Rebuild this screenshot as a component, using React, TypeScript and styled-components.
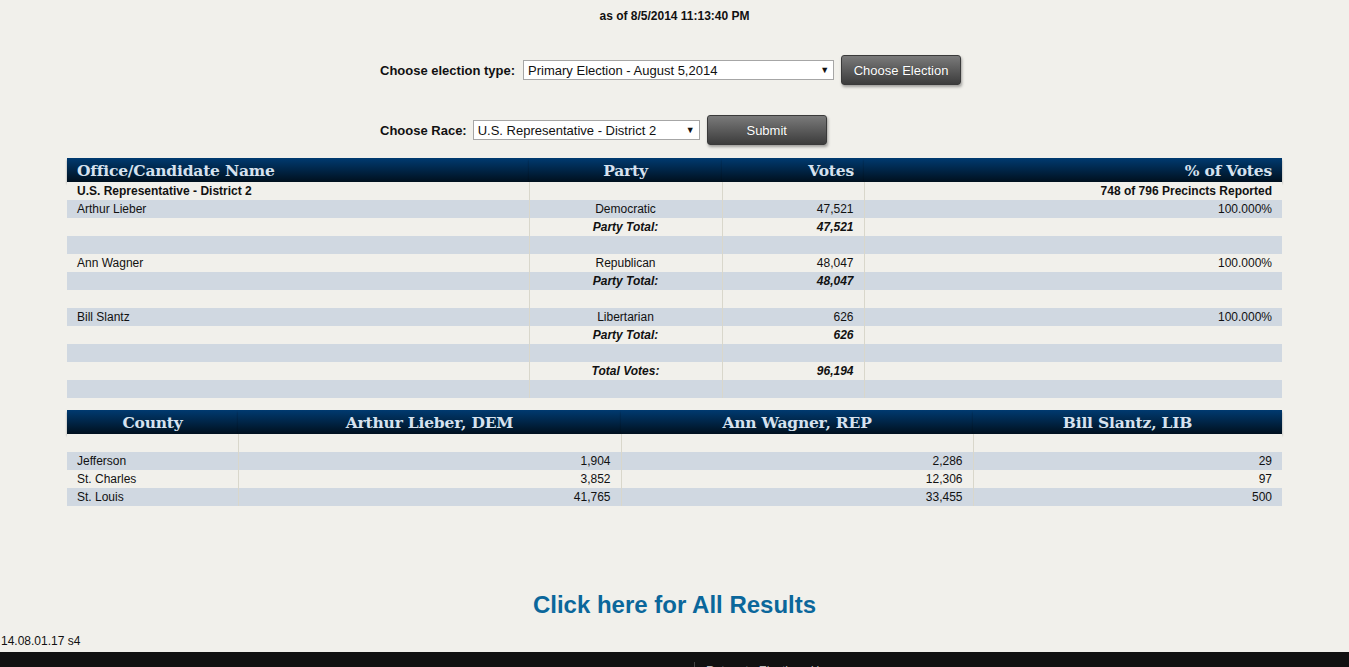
import React from "react";
import styled, { createGlobalStyle } from "styled-components";

const GlobalStyle = createGlobalStyle`
  html, body { margin: 0; padding: 0; }
  body {
    background: #f1f0eb;
    font-family: "Liberation Sans", Arial, sans-serif;
    color: #111;
    overflow: hidden;
  }
`;

const Page = styled.div`
  display: flex;
  flex-direction: column;
  min-height: 667px;
`;

const Stamp = styled.div`
  text-align: center;
  font-size: 12px;
  font-weight: bold;
  line-height: 14px;
  padding-top: 9px;
`;

const Form = styled.form`
  width: 589px;
  margin: 32px auto 0;
  display: flex;
  flex-direction: column;
  gap: 30px;
`;

const FormRow = styled.div`
  display: flex;
  align-items: center;
  height: 30px;
`;

const Label = styled.label<{ $gap?: number }>`
  font-size: 13px;
  font-weight: bold;
  margin-right: ${(p) => p.$gap ?? 6}px;
`;

const SelectWrap = styled.div<{ $w: number }>`
  position: relative;
  width: ${(p) => p.$w}px;
  height: 20px;
  margin-right: 7px;
`;

const Select = styled.select`
  appearance: none;
  width: 100%;
  height: 20px;
  box-sizing: border-box;
  border: 1px solid #a6a6a6;
  background: #fff;
  font-family: "Liberation Sans", Arial, sans-serif;
  font-size: 13px;
  color: #111;
  padding: 0 0 0 4px;
  border-radius: 0;
  outline: none;
`;

const Arrow = styled.span`
  position: absolute;
  right: 5px;
  top: 4px;
  font-size: 9px;
  line-height: 12px;
  color: #111;
  pointer-events: none;
`;

const Button = styled.button`
  width: 120px;
  height: 30px;
  border: 1px solid #3a3a3a;
  border-radius: 3px;
  background: linear-gradient(#7a7a7a, #3c3c3c);
  box-shadow: 1px 2px 3px rgba(0, 0, 0, 0.35);
  color: #fff;
  font-family: "Liberation Sans", Arial, sans-serif;
  font-size: 13px;
  text-shadow: 0 0 1px rgba(0, 0, 0, 0.4);
  padding: 0;
  cursor: pointer;
`;

const Table = styled.table<{ $mt: number }>`
  width: 1215px;
  margin: ${(p) => p.$mt}px auto 0;
  border-collapse: collapse;
  table-layout: fixed;
  font-size: 12px;
`;

const Th = styled.th<{ $align?: string }>`
  height: 24px;
  padding: 1px 10px 0;
  box-sizing: border-box;
  background: linear-gradient(#003a70, #00101e);
  color: #d6e2ef;
  font-family: "DejaVu Serif", Georgia, serif;
  font-size: 15.5px;
  font-weight: bold;
  letter-spacing: -0.2px;
  text-align: ${(p) => p.$align || "center"};
  box-shadow: 0 2px 2px rgba(0, 0, 0, 0.35);
  line-height: 23px;
  white-space: nowrap;
`;

const Tr = styled.tr<{ $alt?: boolean }>`
  background: ${(p) => (p.$alt ? "#d0d8e1" : "#f1f0eb")};
`;

const Td = styled.td<{ $align?: string; $bold?: boolean; $italic?: boolean }>`
  height: 18px;
  box-sizing: border-box;
  padding: 1px 10px 0;
  line-height: 17px;
  border-left: 1px solid #d9d7cb;
  border-right: 1px solid #d9d7cb;
  text-align: ${(p) => p.$align || "left"};
  font-weight: ${(p) => (p.$bold ? "bold" : "normal")};
  font-style: ${(p) => (p.$italic ? "italic" : "normal")};
  white-space: nowrap;
  &:first-child { border-left: none; }
  &:last-child { border-right: none; }
`;

const AllResults = styled.a`
  display: block;
  text-align: center;
  margin-top: 85px;
  font-size: 24px;
  font-weight: bold;
  line-height: 28px;
  color: #0b679b;
  text-decoration: none;
`;

const Version = styled.div`
  font-size: 12px;
  line-height: 14px;
  margin-top: 15px;
  padding-left: 1px;
`;

const Footer = styled.footer`
  margin-top: 4px;
  background: #111;
  flex: 1;
  min-height: 40px;
`;

const FooterNav = styled.ul`
  list-style: none;
  margin: 10px 0 0 694px;
  padding: 0;
  display: flex;
`;

const FooterItem = styled.li`
  border-left: 1px solid #444;
  padding: 2px 0 0 11px;
  font-size: 12px;
  color: #bbb;
`;

type Row = [string, string, string, string, { bold?: boolean; total?: boolean }?];

const raceRows: Row[] = [
  ["U.S. Representative - District 2", "", "", "748 of 796 Precincts Reported", { bold: true }],
  ["Arthur Lieber", "Democratic", "47,521", "100.000%"],
  ["", "Party Total:", "47,521", "", { total: true }],
  ["", "", "", ""],
  ["Ann Wagner", "Republican", "48,047", "100.000%"],
  ["", "Party Total:", "48,047", "", { total: true }],
  ["", "", "", ""],
  ["Bill Slantz", "Libertarian", "626", "100.000%"],
  ["", "Party Total:", "626", "", { total: true }],
  ["", "", "", ""],
  ["", "Total Votes:", "96,194", "", { total: true }],
  ["", "", "", ""],
];

const countyRows = [
  ["", "", "", ""],
  ["Jefferson", "1,904", "2,286", "29"],
  ["St. Charles", "3,852", "12,306", "97"],
  ["St. Louis", "41,765", "33,455", "500"],
];

export default function App() {
  return (
    <Page>
      <GlobalStyle />
      <Stamp>as of 8/5/2014 11:13:40 PM</Stamp>
      <Form onSubmit={(e) => e.preventDefault()}>
        <FormRow>
          <Label $gap={8}>Choose election type:</Label>
          <SelectWrap $w={311}>
            <Select defaultValue="p">
              <option value="p">Primary Election - August 5,2014</option>
            </Select>
            <Arrow>▼</Arrow>
          </SelectWrap>
          <Button type="button">Choose Election</Button>
        </FormRow>
        <FormRow>
          <Label>Choose Race:</Label>
          <SelectWrap $w={227}>
            <Select defaultValue="r">
              <option value="r">U.S. Representative - District 2</option>
            </Select>
            <Arrow>▼</Arrow>
          </SelectWrap>
          <Button type="submit">Submit</Button>
        </FormRow>
      </Form>

      <Table $mt={13}>
        <colgroup>
          <col style={{ width: 462 }} />
          <col style={{ width: 193 }} />
          <col style={{ width: 142 }} />
          <col style={{ width: 418 }} />
        </colgroup>
        <thead>
          <tr>
            <Th $align="left">Office/Candidate Name</Th>
            <Th>Party</Th>
            <Th $align="right">Votes</Th>
            <Th $align="right">% of Votes</Th>
          </tr>
        </thead>
        <tbody>
          {raceRows.map((r, i) => {
            const o = r[4] || {};
            return (
              <Tr key={i} $alt={i % 2 === 1}>
                <Td $bold={o.bold}>{r[0]}</Td>
                <Td $align="center" $bold={o.total} $italic={o.total}>{r[1]}</Td>
                <Td $align="right" $bold={o.total} $italic={o.total}>{r[2]}</Td>
                <Td $align="right" $bold={o.bold}>{r[3]}</Td>
              </Tr>
            );
          })}
        </tbody>
      </Table>

      <Table $mt={12}>
        <colgroup>
          <col style={{ width: 171 }} />
          <col style={{ width: 383 }} />
          <col style={{ width: 352 }} />
          <col style={{ width: 309 }} />
        </colgroup>
        <thead>
          <tr>
            <Th>County</Th>
            <Th>Arthur Lieber, DEM</Th>
            <Th>Ann Wagner, REP</Th>
            <Th>Bill Slantz, LIB</Th>
          </tr>
        </thead>
        <tbody>
          {countyRows.map((r, i) => (
            <Tr key={i} $alt={i % 2 === 1}>
              <Td>{r[0]}</Td>
              <Td $align="right">{r[1]}</Td>
              <Td $align="right">{r[2]}</Td>
              <Td $align="right">{r[3]}</Td>
            </Tr>
          ))}
        </tbody>
      </Table>

      <AllResults href="#">Click here for All Results</AllResults>
      <Version>14.08.01.17 s4</Version>
      <Footer>
        <FooterNav>
          <FooterItem>Return to Elections Home</FooterItem>
        </FooterNav>
      </Footer>
    </Page>
  );
}
